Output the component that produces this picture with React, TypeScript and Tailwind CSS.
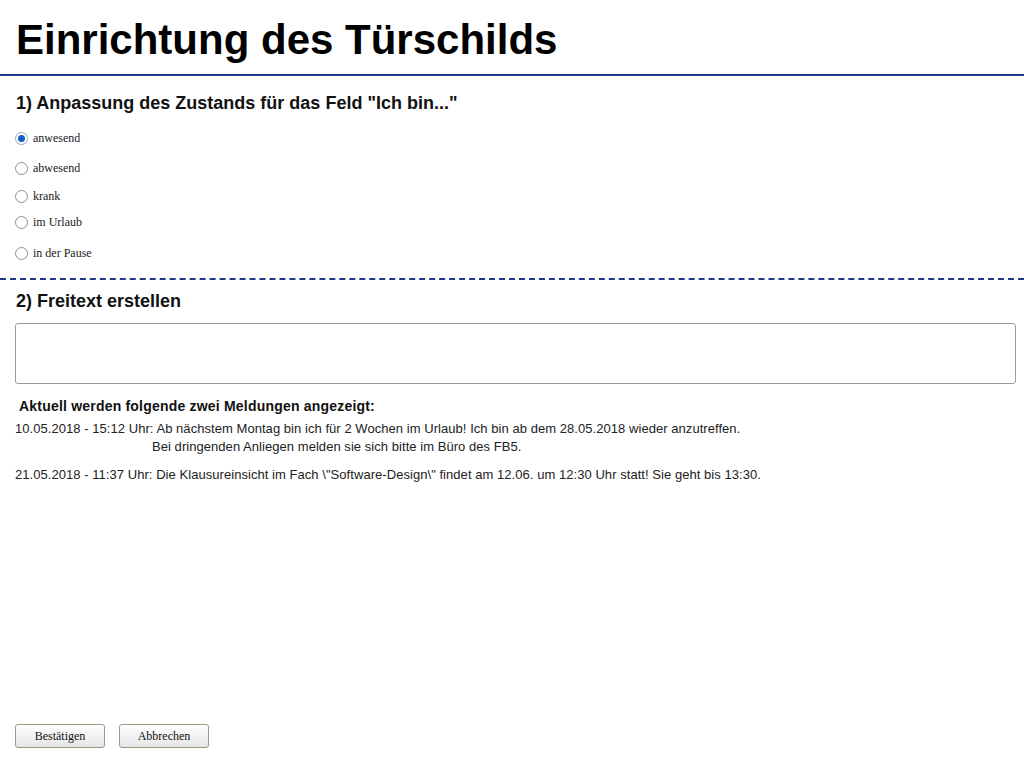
import React, { useState } from "react";

const arial = { fontFamily: '"Liberation Sans", Arial, sans-serif' };

function Radio({ checked, label, onClick, className }: { checked: boolean; label: string; onClick: () => void; className: string }) {
  return (
    <div className={"flex items-center h-[20px] pl-[15px] cursor-pointer " + className} onClick={onClick}>
      <span
        className={
          "w-[13px] h-[13px] rounded-full border flex items-center justify-center bg-white " +
          (checked ? "border-[#9aa8b8]" : "border-[#8f8f8f]")
        }
      >
        {checked && <span className="w-[7px] h-[7px] rounded-full bg-[#0b62c4]" />}
      </span>
      <span className="ml-[5px] text-[12px] leading-[14px] text-[#222] font-['Liberation_Serif',_'Times_New_Roman',_serif]">
        {label}
      </span>
    </div>
  );
}

export default function App() {
  const [sel, setSel] = useState(0);
  const options = ["anwesend", "abwesend", "krank", "im Urlaub", "in der Pause"];
  const margins = ["mt-[16px]", "mt-[10px]", "mt-[8px]", "mt-[6px]", "mt-[11px]"];
  return (
    <div className="h-[768px] flex flex-col bg-white text-black overflow-hidden font-['Liberation_Sans',_Arial,_sans-serif]">
      <h1 className="h-[76px] pt-[19px] pl-[16px] text-[42px] leading-[42px] font-bold border-b-2 border-[#1f3887]">
        Einrichtung des Türschilds
      </h1>
      <h2 className="mt-[18px] pl-[16px] text-[18px] leading-[18px] font-bold text-[#111]">
        1) Anpassung des Zustands für das Feld "Ich bin..."
      </h2>
      <div className="flex flex-col">
        {options.map((o, i) => (
          <Radio key={o} label={o} checked={sel === i} onClick={() => setSel(i)} className={margins[i]} />
        ))}
      </div>
      <div className="mt-[15px] border-t-2 border-dashed border-[#1f3887]" />
      <h2 className="mt-[12px] pl-[16px] text-[18px] leading-[18px] font-bold text-[#111]">2) Freitext erstellen</h2>
      <textarea
        className="mt-[13px] ml-[15px] mr-[8px] h-[61px] border border-[#a09a92] rounded-[3px] resize-none outline-none p-1 text-[13px]"
        style={arial}
      />
      <div className="mt-[16px] pl-[19px] text-[14px] leading-[13px] font-bold text-[#111] tracking-[0.2px]">
        Aktuell werden folgende zwei Meldungen angezeigt:
      </div>
      <div className="mt-[7px] pl-[15px] text-[13px] leading-[18px] text-[#222] tracking-[0.05px]">
        <div>10.05.2018 - 15:12 Uhr: Ab nächstem Montag bin ich für 2 Wochen im Urlaub! Ich bin ab dem 28.05.2018 wieder anzutreffen.</div>
        <div className="pl-[137px]">Bei dringenden Anliegen melden sie sich bitte im Büro des FB5.</div>
        <div className="mt-[10px]">
          21.05.2018 - 11:37 Uhr: Die Klausureinsicht im Fach \"Software-Design\" findet am 12.06. um 12:30 Uhr statt! Sie geht bis 13:30.
        </div>
      </div>
      <div className="mt-auto pb-[20px] pl-[15px] flex gap-[14px]">
        {["Bestätigen", "Abbrechen"].map((b) => (
          <button
            key={b}
            className="w-[90px] h-[24px] rounded-[3px] border border-[#a39580] bg-gradient-to-b from-white to-[#e6e6e6] text-[12px] text-[#111] font-['Liberation_Serif',_'Times_New_Roman',_serif]"
          >
            {b}
          </button>
        ))}
      </div>
    </div>
  );
}
